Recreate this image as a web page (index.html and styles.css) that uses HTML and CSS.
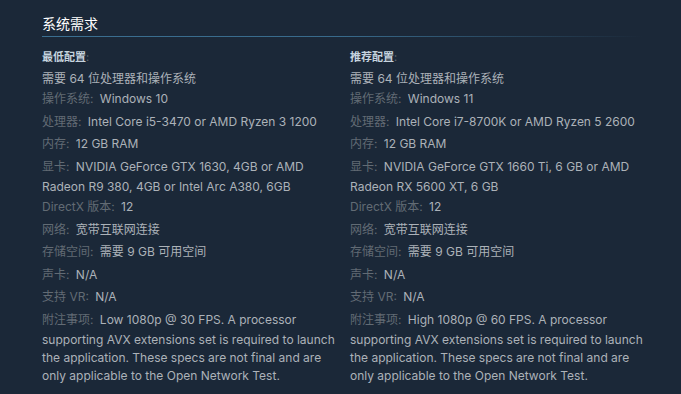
FILE: index.html
```html
<!DOCTYPE html>
<html lang="zh-CN">
<head>
<meta charset="utf-8">
<title>系统需求</title>
<link rel="stylesheet" href="styles.css">
</head>
<body>
<div class="sysreq">
  <h2 class="title">系统需求</h2>
  <div class="cols">
    <div class="col">
      <div class="colhead"><strong>最低配置</strong>:</div>
      <ul>
        <li>需要 64 位处理器和操作系统</li>
        <li><span class="k">操作系统:</span> Windows 10</li>
        <li><span class="k">处理器:</span> Intel Core i5-3470 or AMD Ryzen 3 1200</li>
        <li><span class="k">内存:</span> 12 GB RAM</li>
        <li><span class="k">显卡:</span> NVIDIA GeForce GTX 1630, 4GB or AMD Radeon R9 380, 4GB or Intel Arc A380, 6GB</li>
        <li><span class="k">DirectX 版本:</span> 12</li>
        <li><span class="k">网络:</span> 宽带互联网连接</li>
        <li><span class="k">存储空间:</span> 需要 9 GB 可用空间</li>
        <li><span class="k">声卡:</span> N/A</li>
        <li><span class="k">支持 VR:</span> N/A</li>
        <li><span class="k">附注事项:</span> Low 1080p @ 30 FPS. A processor supporting AVX extensions set is required to launch the application. These specs are not final and are only applicable to the Open Network Test.</li>
      </ul>
    </div>
    <div class="col">
      <div class="colhead"><strong>推荐配置</strong>:</div>
      <ul>
        <li>需要 64 位处理器和操作系统</li>
        <li><span class="k">操作系统:</span> Windows 11</li>
        <li><span class="k">处理器:</span> Intel Core i7-8700K or AMD Ryzen 5 2600</li>
        <li><span class="k">内存:</span> 12 GB RAM</li>
        <li><span class="k">显卡:</span> NVIDIA GeForce GTX 1660 Ti, 6 GB or AMD Radeon RX 5600 XT, 6 GB</li>
        <li><span class="k">DirectX 版本:</span> 12</li>
        <li><span class="k">网络:</span> 宽带互联网连接</li>
        <li><span class="k">存储空间:</span> 需要 9 GB 可用空间</li>
        <li><span class="k">声卡:</span> N/A</li>
        <li><span class="k">支持 VR:</span> N/A</li>
        <li><span class="k">附注事项:</span> High 1080p @ 60 FPS. A processor supporting AVX extensions set is required to launch the application. These specs are not final and are only applicable to the Open Network Test.</li>
      </ul>
    </div>
  </div>
</div>
</body>
</html>
```
FILE: styles.css
```css
html, body {
  margin: 0;
  padding: 0;
  background: #1b2838;
}
body {
  font-family: Inter, "Noto Sans CJK SC", sans-serif;
  color: #acb2b8;
}
.sysreq {
  padding: 14px 0 0 42px;
  width: 600px;
}
.title {
  margin: 0;
  font-size: 14px;
  font-weight: normal;
  color: #ffffff;
  line-height: 20px;
  padding-bottom: 2px;
  border-bottom: 1px solid;
  border-image: linear-gradient(to right, #3b6f91 0%, #386a8b 50%, rgba(56,106,139,0) 100%) 1;
}
.cols {
  display: flex;
  gap: 14px;
  margin-top: 12px;
}
.col {
  width: 294px;
  flex: none;
}
.colhead {
  font-size: 11px;
  line-height: 16px;
  color: #626b74;
  margin-bottom: 5px;
}
.colhead strong {
  color: #c6d4df;
  font-weight: bold;
}
ul {
  list-style: none;
  margin: 0;
  padding: 0;
}
li {
  font-size: 12px;
  line-height: 18px;
  margin-bottom: 2px;
  color: #acb2b8;
}
.k {
  display: inline-block;
  line-height: 18px;
  padding-bottom: 2.5px;
  color: #626b74;
  margin-right: 3px;
}
```
